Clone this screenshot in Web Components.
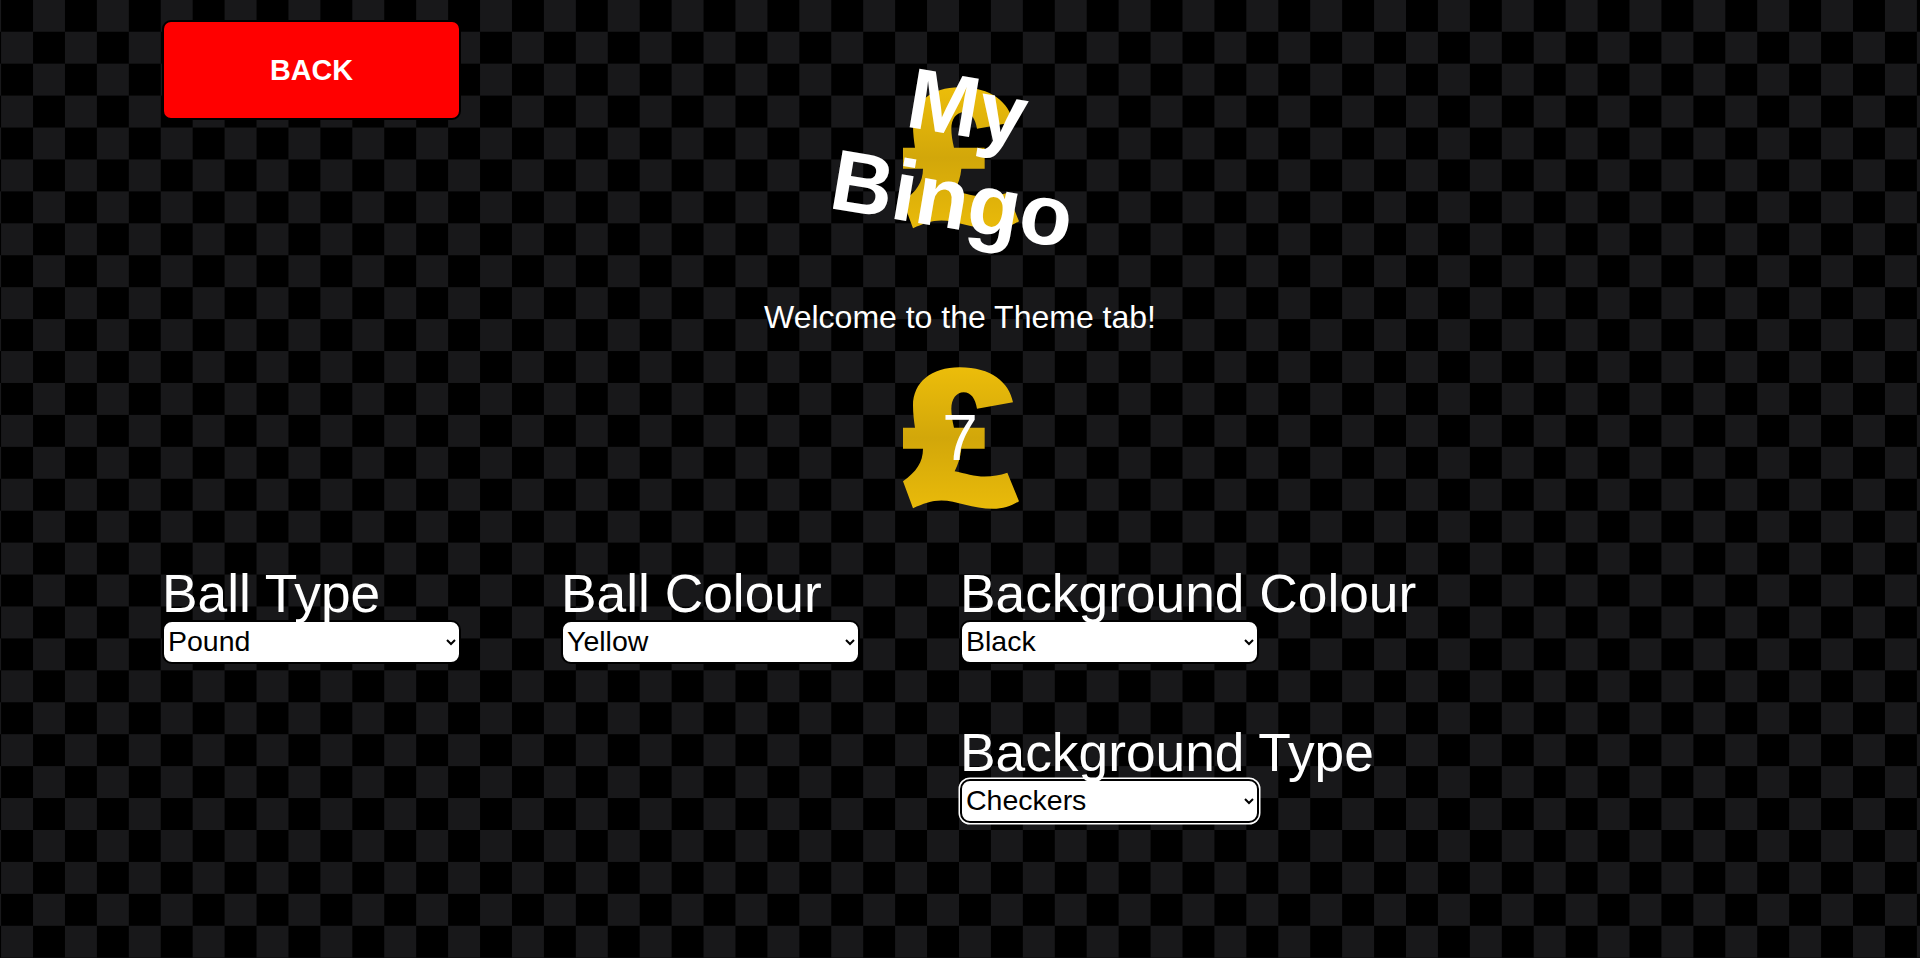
<!DOCTYPE html>
<html lang="en">
<head>
<meta charset="utf-8">
<title>My Bingo</title>
<style>
  html, body { margin: 0; height: 100%; }
  body {
    overflow: hidden;
    font-family: "Liberation Sans", Arial, sans-serif;
    color: #fff;
    background-color: #000;
    background-image: conic-gradient(#18181a 25%, #000 0 50%, #18181a 0 75%, #000 0);
    background-size: 63.86px 63.86px;
    background-position: 1.1px -0.2px;
  }
</style>
</head>
<body>
<theme-page>
  <back-button slot="back">BACK</back-button>
  <bingo-logo slot="logo"></bingo-logo>
  <span slot="welcome">Welcome to the Theme tab!</span>
  <pound-ball slot="ball">7</pound-ball>
  <theme-select slot="options" label="Ball Type" value="Pound" choices="Pound,Circle,Star"></theme-select>
  <theme-select slot="options" label="Ball Colour" value="Yellow" choices="Yellow,Red,Blue,Green"></theme-select>
  <div slot="options" class="stack" style="display:flex;flex-direction:column;gap:63px">
    <theme-select label="Background Colour" value="Black" choices="Black,White,Blue"></theme-select>
    <theme-select label="Background Type" value="Checkers" choices="Checkers,Plain,Stripes" focused></theme-select>
  </div>
</theme-page>

<script>
// the pound shape is shared by the logo and the ball preview
const POUND_SVG = `
  <svg viewBox="130 80 348 425" width="116" height="142" aria-hidden="true">
    <defs>
      <linearGradient id="gold" x1="0" y1="0" x2="0" y2="1">
        <stop offset="0" stop-color="#ecbd0a"/>
        <stop offset="0.5" stop-color="#d2a70a"/>
        <stop offset="1" stop-color="#e9ba0a"/>
      </linearGradient>
    </defs>
    <path fill="url(#gold)" d="M460 185 C448 125 395 80 300 80 C215 80 160 125 160 195 C160 220 163 242 166 262 L130 262 L130 325 L190 325
      C190 365 170 395 130 422 L160 503 C190 490 215 480 245 480 C290 480 340 505 400 505 C430 505 455 497 478 482 L443 397
      C420 405 400 408 375 408 C345 408 315 398 285 392 C295 372 303 350 305 325 L375 325 L375 262 L283 262
      C278 240 275 222 275 205 C275 175 290 155 312 155 C335 155 347 175 352 205 Z"/>
  </svg>`;

class BackButton extends HTMLElement {
  constructor() {
    super();
    this.attachShadow({ mode: 'open' });
    this.shadowRoot.innerHTML = `
      <style>
        :host { display: block; width: 299px; }
        button {
          display: block;
          box-sizing: border-box;
          width: 100%;
          height: 100px;
          border: 2px solid #000;
          border-radius: 9px;
          background: #f00;
          color: #fff;
          font: bold 28.8px "Liberation Sans", Arial, sans-serif;
          cursor: pointer;
        }
      </style>
      <button><slot></slot></button>
    `;
  }
}

class BingoLogo extends HTMLElement {
  constructor() {
    super();
    this.attachShadow({ mode: 'open' });
    this.shadowRoot.innerHTML = `
      <style>
        :host {
          display: flex;
          justify-content: center;
          position: relative;
          width: 300px;
          margin-top: 67px;
        }
        svg { display: block; margin-left: 2px; }
        .name {
          position: absolute;
          left: 0;
          right: 0;
          top: -27px;
          transform: rotate(9.5deg);
          font: bold 86px/93px "Liberation Sans", Arial, sans-serif;
          color: #fff;
          text-align: center;
        }
      </style>
      ${POUND_SVG}
      <div class="name">My<br>Bingo</div>
    `;
  }
}

class PoundBall extends HTMLElement {
  constructor() {
    super();
    this.attachShadow({ mode: 'open' });
    this.shadowRoot.innerHTML = `
      <style>
        :host {
          display: flex;
          justify-content: center;
          align-items: center;
          position: relative;
          width: 116px;
          height: 142px;
        }
        svg { display: block; margin-left: 2px; flex: none; }
        .num {
          position: absolute;
          inset: 0;
          display: flex;
          justify-content: center;
          align-items: center;
          font: 64px "Liberation Sans", Arial, sans-serif;
          color: #fff;
        }
      </style>
      ${POUND_SVG}
      <div class="num"><slot></slot></div>
    `;
  }
}

class ThemeSelect extends HTMLElement {
  constructor() {
    super();
    this.attachShadow({ mode: 'open' });
  }

  connectedCallback() {
    const value = this.getAttribute('value');
    const choices = this.getAttribute('choices').split(',');
    this.shadowRoot.innerHTML = `
      <style>
        :host { display: block; width: 299px; }
        label {
          display: block;
          width: max-content;
          font: 53.3px/52px "Liberation Sans", Arial, sans-serif;
          color: #fff;
        }
        select {
          display: block;
          box-sizing: border-box;
          width: 100%;
          height: 44px;
          padding-bottom: 2px;
          border: 2px solid #000;
          border-radius: 10px;
          background: #fff;
          color: #000;
          font: 28.5px "Liberation Sans", Arial, sans-serif;
          outline: none;
        }
        :host([focused]) select { box-shadow: 0 0 0 1.5px #fff; }
      </style>
      <label for="s">${this.getAttribute('label')}</label>
      <select id="s">
        ${choices.map(c => `<option${c === value ? ' selected' : ''}>${c}</option>`).join('')}
      </select>
    `;
  }
}

class ThemePage extends HTMLElement {
  constructor() {
    super();
    this.attachShadow({ mode: 'open' });
    this.shadowRoot.innerHTML = `
      <style>
        :host {
          display: block;
          box-sizing: border-box;
          height: 958px;
          padding: 20px 162px 0;
        }
        header {
          display: grid;
          grid-template-columns: 1fr auto 1fr;
          align-items: start;
          justify-items: center;
          height: 278.5px;
        }
        header ::slotted([slot="back"]) { justify-self: start; }
        .welcome {
          font-size: 32px;
          line-height: 37px;
          text-align: center;
          color: #fff;
        }
        .ball {
          display: flex;
          justify-content: center;
          margin-top: 31.5px;
        }
        .options {
          display: grid;
          grid-template-columns: repeat(4, 1fr);
          align-items: start;
          margin-top: 58.5px;
        }
      </style>
      <header>
        <slot name="back"></slot>
        <slot name="logo"></slot>
      </header>
      <div class="welcome"><slot name="welcome"></slot></div>
      <div class="ball"><slot name="ball"></slot></div>
      <div class="options"><slot name="options"></slot></div>
    `;
  }
}

customElements.define('back-button', BackButton);
customElements.define('bingo-logo', BingoLogo);
customElements.define('pound-ball', PoundBall);
customElements.define('theme-select', ThemeSelect);
customElements.define('theme-page', ThemePage);
</script>
</body>
</html>
